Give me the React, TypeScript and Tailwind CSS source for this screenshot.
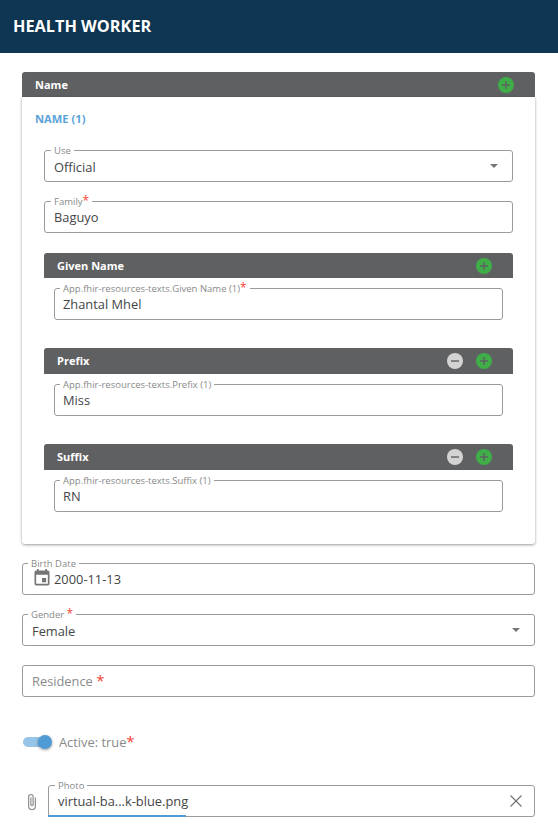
import React from "react";

function Req({ big }: { big?: boolean }) {
  return (
    <span className={`text-[#f44336] ${big ? "text-[15px] leading-none" : "text-[12px] leading-[10px]"}`}>*</span>
  );
}

function Field({
  label,
  value,
  placeholder,
  trailing,
  leading,
  className = "pl-[9px]",
  labelClass = "left-[6px]",
  valueClass = "",
}: {
  label?: React.ReactNode;
  value?: string;
  placeholder?: React.ReactNode;
  trailing?: React.ReactNode;
  leading?: React.ReactNode;
  className?: string;
  labelClass?: string;
  valueClass?: string;
}) {
  return (
    <div className={`relative flex h-8 items-center rounded-[3px] border border-[#9b9b9b] bg-white pr-[11px] ${className}`}>
      {label && (
        <span className={`absolute -top-[6px] bg-white px-[3px] text-[9.5px] leading-[11px] text-[#8a8a8a] ${labelClass}`}>
          {label}
        </span>
      )}
      {leading}
      {value && <span className={`text-[12.85px] leading-[18px] text-[#444648] ${valueClass}`}>{value}</span>}
      {placeholder && <span className="text-[12.85px] leading-[18px] text-[#8a8a8a]">{placeholder}</span>}
      <span className="ml-auto flex items-center">{trailing}</span>
    </div>
  );
}

function Caret() {
  return <span className="mr-[3px] h-0 w-0 border-x-[4px] border-t-[4px] border-x-transparent border-t-[#757575]" />;
}

function RoundIcon({ kind }: { kind: "add" | "remove" }) {
  const bg = kind === "add" ? "#3fae49" : "#d3d3d3";
  return (
    <svg width="16" height="16" viewBox="0 0 16 16" className="block">
      <circle cx="8" cy="8" r="8" fill={bg} />
      <path d={kind === "add" ? "M4 8h8M8 4v8" : "M4 8h8"} stroke="#5f6062" strokeWidth="1.4" fill="none" />
    </svg>
  );
}

function Bar({
  title,
  remove,
  h,
  titleClass = "",
}: {
  title: string;
  remove?: boolean;
  h: string;
  titleClass?: string;
}) {
  return (
    <div className={`flex items-center rounded-t-[3px] bg-[#5f6062] pl-[13px] pr-[21px] ${h}`}>
      <span className={`text-[11px] font-bold leading-none text-white ${titleClass}`}>{title}</span>
      <span className="ml-auto flex items-center gap-[13px]">
        {remove && <RoundIcon kind="remove" />}
        <RoundIcon kind="add" />
      </span>
    </div>
  );
}

function Group({
  title,
  remove,
  label,
  value,
  h = "h-[26px]",
  titleClass = "-mt-[2px]",
}: {
  title: string;
  remove?: boolean;
  label: React.ReactNode;
  value: string;
  h?: string;
  titleClass?: string;
}) {
  return (
    <div className="flex flex-col">
      <Bar title={title} remove={remove} h={h} titleClass={titleClass} />
      <div className="px-[10px] pt-[10px]">
        <Field className="pl-[8px]" labelClass="left-[5px]" label={label} value={value} />
      </div>
    </div>
  );
}

export default function App() {
  return (
    <div className="min-h-[839px] bg-white font-['Open_Sans',sans-serif]">
      <header className="flex h-[53px] items-center bg-[#0e3551] pl-[13px]">
        <h1 className="text-[16.3px] font-bold leading-none text-white">HEALTH WORKER</h1>
      </header>

      <main className="flex flex-col pl-[22px] pr-[23px] pt-[19px]">
        <Bar title="Name" h="h-[25px]" />
        <section className="rounded-b-[3px] bg-white px-[22px] pb-[32px] shadow-[0_1px_3px_rgba(0,0,0,0.4)]">
          <div className="-mx-[9px] flex h-[44px] items-center text-[11.2px] font-bold text-[#5ba3d9]">NAME (1)</div>
          <div className="flex flex-col pt-[9px]">
            <Field label="Use" value="Official" valueClass="pt-[2px]" trailing={<Caret />} />
            <Field className="mt-[19px] pl-[9px]" label={<>Family<Req /></>} value="Baguyo" />
            <div className="mt-[20px]">
              <Group title="Given Name" h="h-[25px]" titleClass="" label={<>App.fhir-resources-texts.Given Name (1)<Req /></>} value="Zhantal Mhel" />
            </div>
            <div className="mt-[28px]">
              <Group title="Prefix" remove label="App.fhir-resources-texts.Prefix (1)" value="Miss" />
            </div>
            <div className="mt-[28px]">
              <Group title="Suffix" remove label="App.fhir-resources-texts.Suffix (1)" value="RN" />
            </div>
          </div>
        </section>

        <Field
          className="mt-[19px] pl-[9px]"
          label="Birth Date"
          labelClass="left-[5px]"
          value="2000-11-13"
          leading={
            <svg width="20" height="20" viewBox="0 0 24 24" className="-mt-[2px] mr-[2px]" fill="#757575">
              <path d="M17 12h-5v5h5v-5zM16 1v2H8V1H6v2H5c-1.11 0-1.99.9-1.99 2L3 19a2 2 0 0 0 2 2h14c1.1 0 2-.9 2-2V5c0-1.1-.9-2-2-2h-1V1h-2zm3 18H5V8h14v11z" />
            </svg>
          }
        />
        <Field className="mt-[19px] pl-[9px]" labelClass="left-[5px]" label={<>Gender <Req /></>} value="Female" valueClass="pt-[2px]" trailing={<Caret />} />
        <Field className="mt-[19px] pl-[9px]" placeholder={<>Residence <Req big /></>} />

        <div className="mt-[35px] flex h-5 items-center">
          <span className="relative ml-[1px] flex h-5 w-[29px] items-center">
            <span className="h-[10px] w-[28px] rounded-full bg-[#97c5e8]" />
            <span className="absolute right-0 top-[3px] h-[14px] w-[14px] rounded-full bg-[#4f9bd5] shadow-[0_1px_3px_rgba(0,0,0,0.4)]" />
          </span>
          <span className="ml-[7px] text-[12.85px] leading-[18px] text-[#8a8a8a]">Active: true<Req big /></span>
        </div>

        <div className="mt-[33px] flex items-center">
          <svg width="18" height="20" viewBox="0 0 24 24" className="ml-[1px] mr-[7px] mt-[1px] shrink-0" fill="none" stroke="#8f8f8f" strokeWidth="1.6">
            <path d="M16.5 6v11.5a4.5 4.5 0 0 1-9 0V5a3 3 0 0 1 6 0v10.5a1.5 1.5 0 0 1-3 0V6" />
          </svg>
          <div className="relative flex-1">
            <Field label="Photo" value="virtual-ba...k-blue.png" trailing={
              <svg width="12" height="12" viewBox="0 0 12 12" className="mr-[1px]" stroke="#6f6f6f" strokeWidth="1.1" fill="none">
                <path d="M.5.5l11 11M11.5.5l-11 11" />
              </svg>
            } />
            <div className="absolute bottom-0 left-0 h-[2px] w-[138px] bg-[#4f9bd5]" />
          </div>
        </div>
      </main>
    </div>
  );
}
